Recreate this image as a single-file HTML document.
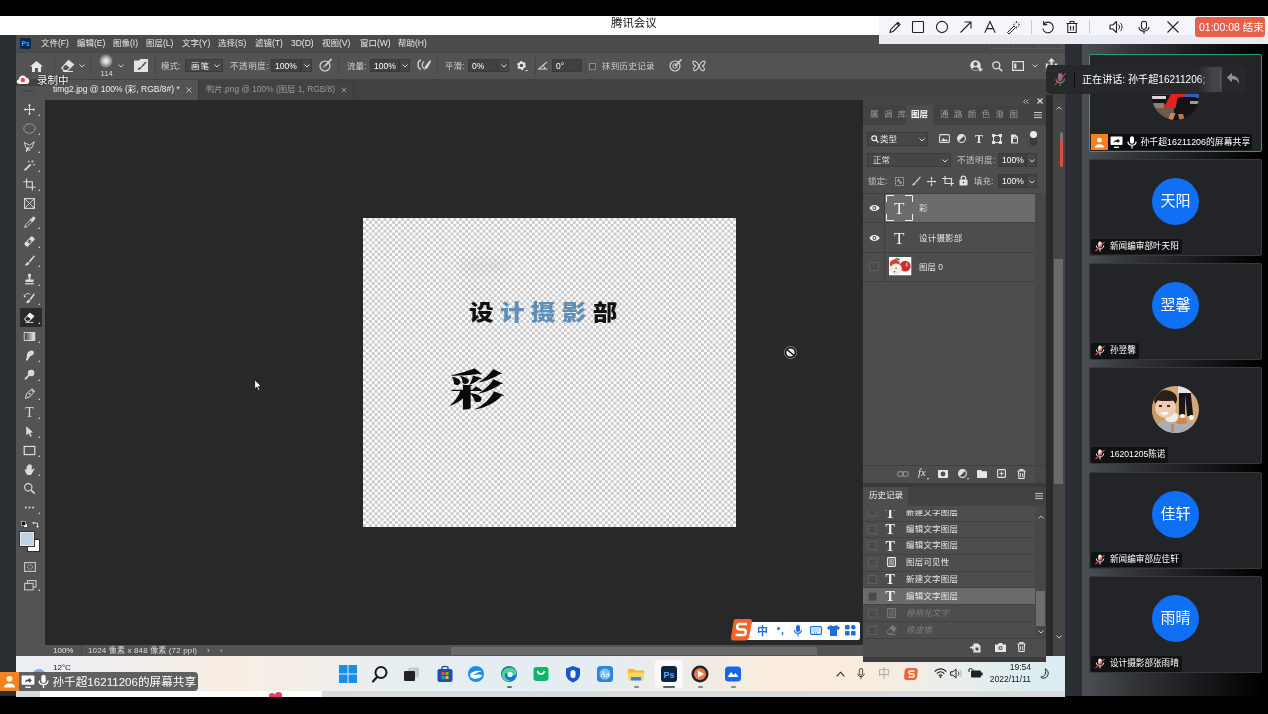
<!DOCTYPE html>
<html lang="zh-CN">
<head>
<meta charset="utf-8">
<title>腾讯会议</title>
<style>
*{box-sizing:border-box;margin:0;padding:0}
html,body{width:1268px;height:714px;overflow:hidden;background:#000}
body{position:relative;filter:blur(0.4px);font-family:"Liberation Sans","Noto Sans CJK SC",sans-serif;font-size:9px;color:#ddd;-webkit-font-smoothing:antialiased}
.a{position:absolute}
.t{position:absolute;white-space:nowrap;line-height:1}
svg{position:absolute;overflow:visible}
/* top */
#titlebar{left:0;top:16px;width:1268px;height:19px;background:#fff}
#title{left:611px;top:17.7px;font-size:11.4px;color:#111;letter-spacing:0}
#deskstrip{left:0;top:35px;width:16px;height:661px;background:#2b2e33}
/* photoshop */
#ps{left:16px;top:35px;width:1049px;height:621px;background:#282828}
#menubar{left:0;top:0;width:1049px;height:17px;background:#4b4b4b}
#optbar{left:0;top:17px;width:1049px;height:27px;background:#535353;border-top:1px solid #474747}
#tabbar{left:0;top:44px;width:1049px;height:21px;background:#424242}
#tab1{left:29px;top:45px;width:153px;height:20px;background:#535353}
#tools{left:0;top:51px;width:29px;height:570px;background:#535353}
#status{left:29px;top:610px;width:1020px;height:11px;background:#535353}
.menu{top:4px;font-size:8.5px;color:#e8e8e8}
.ol{font-size:8.5px;color:#cfcfcf;top:10px}
.field{background:#464646;border:1px solid #3a3a3a;height:13px;top:7px;font-size:8.5px;color:#eee;line-height:12.5px;padding-left:3px}
/* right meeting panel */
#mp{left:1065px;top:35px;width:203px;height:661px;background:#1c1d1f}
.tile{left:24px;width:173px;height:97px;background:#222427;border:1px solid #37383b;border-radius:2px}
.av{left:62px;top:18px;width:47px;height:47px;border-radius:50%;background:#0f6ff5;color:#fff;font-size:15px;text-align:center;line-height:46px}
.nm{left:1px;bottom:0.5px;height:15.5px;background:rgba(12,12,14,.8);color:#fff;font-size:8.6px;line-height:15.5px;padding:0 3px 0 19px;border-radius:2px;white-space:nowrap}
/* taskbar */
#taskbar{left:16px;top:656px;width:1049px;height:35px;background:linear-gradient(90deg,#eaeff4 0%,#efeeee 9%,#f8ede3 20%,#f4eee8 28%,#e6eef2 36%,#e4edf2 55%,#efece8 64%,#f9ebde 72%,#f8ecdf 82%,#e8eeec 90%,#d8edf3 100%)}
</style>
</head>
<body>
<div class="a" id="titlebar"></div>
<div class="t" id="title">腾讯会议</div>
<div class="a" id="deskstrip"></div>

<div class="a" id="ps">
  <div class="a" id="menubar"></div>
  <!-- menubar -->
  <svg style="left:4px;top:3px" width="11" height="11" viewBox="0 0 11 11"><rect width="11" height="11" rx="1.5" fill="#0a2a4d"/><text x="1.6" y="8.2" font-family="Liberation Sans,sans-serif" font-size="6.5" font-weight="bold" fill="#38a8ff">Ps</text></svg>
  <div class="t menu" style="left:25px">文件(F)</div>
  <div class="t menu" style="left:61px">编辑(E)</div>
  <div class="t menu" style="left:97px">图像(I)</div>
  <div class="t menu" style="left:130px">图层(L)</div>
  <div class="t menu" style="left:166px">文字(Y)</div>
  <div class="t menu" style="left:202px">选择(S)</div>
  <div class="t menu" style="left:239px">滤镜(T)</div>
  <div class="t menu" style="left:275px">3D(D)</div>
  <div class="t menu" style="left:306px">视图(V)</div>
  <div class="t menu" style="left:344px">窗口(W)</div>
  <div class="t menu" style="left:382px">帮助(H)</div>

  <div class="a" id="optbar"></div>
  <div class="a" id="tabbar"></div>
  <div class="a" id="tab1"></div>
  
  <div class="a" style="left:973px;top:8px;width:74px;height:6px;border:1px solid #585858;border-top:0"></div>
  <div class="a" style="left:997px;top:8px;width:1px;height:6px;background:#585858"></div>
  <div class="a" style="left:1022px;top:8px;width:1px;height:6px;background:#585858"></div>
  <!-- options bar -->
  <svg style="left:14px;top:26px" width="13" height="11" viewBox="0 0 13 11"><path d="M6.5 0 L13 5.6 H11 V11 H8 V7 H5 V11 H2 V5.6 H0 Z" fill="#e6e6e6"/></svg>
  <div class="a" style="left:38px;top:22px;width:1px;height:18px;background:#464646"></div>
  <svg style="left:45px;top:25px" width="13" height="12" viewBox="0 0 13 12"><path d="M7.5 0.5 L12.5 4.5 L6.5 10.5 H3 L0.8 8 Z" fill="none" stroke="#e0e0e0" stroke-width="1.2"/><path d="M7.5 0.5 L12.5 4.5 L9 8 L4 4 Z" fill="#e0e0e0"/><path d="M2 11.5 H12" stroke="#e0e0e0" stroke-width="1"/></svg>
  <svg style="left:63px;top:29px" width="6" height="4" viewBox="0 0 6 4"><path d="M0.5 0.5 L3 3 L5.5 0.5" fill="none" stroke="#d0d0d0" stroke-width="1"/></svg>
  <div class="a" style="left:74px;top:22px;width:1px;height:18px;background:#464646"></div>
  <div class="a" style="left:83px;top:19px;width:14px;height:14px;border-radius:50%;background:radial-gradient(circle,#f4f4f4 0%,#d0d0d0 25%,#8a8a8a 55%,rgba(83,83,83,0) 72%)"></div>
  <div class="t" style="left:84.5px;top:35px;font-size:7.6px;color:#ddd">114</div>
  <svg style="left:102px;top:29px" width="6" height="4" viewBox="0 0 6 4"><path d="M0.5 0.5 L3 3 L5.5 0.5" fill="none" stroke="#d0d0d0" stroke-width="1"/></svg>
  <svg style="left:118px;top:24px" width="14" height="13" viewBox="0 0 14 13"><path d="M0 1.5 H5 L6.5 0 H14 V13 H0 Z" fill="#e2e2e2"/><path d="M11.5 2.5 L7 7.5 L8 8.5 L12.5 3.5 Z M6.3 8 C5 8.2 4.6 9.5 3 10.6 C5 11 7 10.5 7.4 9 Z" fill="#4a4a4a"/></svg>
  <div class="a" style="left:139px;top:22px;width:1px;height:18px;background:#464646"></div>
  <div class="t ol" style="left:145px;top:27px">模式:</div>
  <div class="a field" style="left:169px;top:24px;width:38px;padding-left:5px;letter-spacing:1px">画笔</div>
  <svg style="left:198px;top:29px" width="6" height="4" viewBox="0 0 6 4"><path d="M0.5 0.5 L3 3 L5.5 0.5" fill="none" stroke="#d8d8d8" stroke-width="1"/></svg>
  <div class="t ol" style="left:214px;top:27px;letter-spacing:0.6px">不透明度:</div>
  <div class="a field" style="left:255px;top:24px;width:30px;background:#404040;color:#fff">100%</div>
  <div class="a field" style="left:285px;top:24px;width:11px"></div>
  <svg style="left:288px;top:29px" width="6" height="4" viewBox="0 0 6 4"><path d="M0.5 0.5 L3 3 L5.5 0.5" fill="none" stroke="#d8d8d8" stroke-width="1"/></svg>
  <svg style="left:303px;top:23px" width="14" height="14" viewBox="0 0 14 14"><circle cx="6" cy="8" r="5" fill="none" stroke="#d8d8d8" stroke-width="1.2"/><path d="M6 8 L12.5 1" stroke="#d8d8d8" stroke-width="1.6"/><path d="M4 9.5 L6 8" stroke="#d8d8d8" stroke-width="1"/></svg>
  <div class="a" style="left:322px;top:22px;width:1px;height:18px;background:#464646"></div>
  <div class="t ol" style="left:331px;top:27px">流量:</div>
  <div class="a field" style="left:354px;top:24px;width:29px;background:#404040;color:#fff">100%</div>
  <div class="a field" style="left:383px;top:24px;width:11px"></div>
  <svg style="left:386px;top:29px" width="6" height="4" viewBox="0 0 6 4"><path d="M0.5 0.5 L3 3 L5.5 0.5" fill="none" stroke="#d8d8d8" stroke-width="1"/></svg>
  <svg style="left:400px;top:24px" width="16" height="12" viewBox="0 0 16 12"><path d="M5 1 C1 2 1 9 5 10.5" fill="none" stroke="#d8d8d8" stroke-width="1.3"/><path d="M8 2.5 C5.5 4 5.5 8 8 9.5" fill="none" stroke="#d8d8d8" stroke-width="1.2"/><path d="M14 1 L9 7.5 L8 11 L11.5 9 L15 2.5 Z" fill="#d8d8d8"/></svg>
  <div class="a" style="left:421px;top:22px;width:1px;height:18px;background:#464646"></div>
  <div class="t ol" style="left:429px;top:27px">平滑:</div>
  <div class="a field" style="left:452px;top:24px;width:30px;background:#404040;color:#fff">0%</div>
  <div class="a field" style="left:482px;top:24px;width:11px"></div>
  <svg style="left:485px;top:29px" width="6" height="4" viewBox="0 0 6 4"><path d="M0.5 0.5 L3 3 L5.5 0.5" fill="none" stroke="#d8d8d8" stroke-width="1"/></svg>
  <svg style="left:500px;top:25px" width="12" height="12" viewBox="0 0 12 12"><circle cx="5.5" cy="5.5" r="3.2" fill="none" stroke="#e6e6e6" stroke-width="2.4" stroke-dasharray="2 1.35"/><circle cx="5.5" cy="5.5" r="2.6" fill="none" stroke="#e6e6e6" stroke-width="1.6"/><path d="M9 10 h3 l-1.5 1.6 z" fill="#e6e6e6"/></svg>
  <div class="a" style="left:519px;top:22px;width:1px;height:18px;background:#464646"></div>
  <div class="a" style="left:569px;top:22px;width:1px;height:18px;background:#464646"></div>
  <svg style="left:522px;top:26px" width="10" height="9" viewBox="0 0 10 9"><path d="M9 0.8 L0.8 8 H9.5" fill="none" stroke="#d8d8d8" stroke-width="1.1"/><path d="M5 4.2 C6.2 5.4 6.6 6.6 6.5 8" fill="none" stroke="#d8d8d8" stroke-width="1"/></svg>
  <div class="a field" style="left:536px;top:24px;width:30px;background:#404040;color:#fff">0°</div>
  <div class="a" style="left:573px;top:28px;width:7px;height:7px;border:1px solid #8a8a8a;background:#4a4a4a"></div>
  <div class="t ol" style="left:586px;top:27px;letter-spacing:0.3px">抹到历史记录</div>
  <svg style="left:653px;top:24px" width="13" height="13" viewBox="0 0 13 13"><circle cx="6" cy="7" r="5" fill="none" stroke="#d0d0d0" stroke-width="1.2"/><circle cx="6" cy="7" r="2.2" fill="none" stroke="#d0d0d0" stroke-width="1"/><path d="M6 7 L12.5 0.5" stroke="#d0d0d0" stroke-width="1.6"/></svg>
  <svg style="left:676px;top:25px" width="14" height="12" viewBox="0 0 14 12"><path d="M7 6 C5 1 1.5 0.5 1 1.5 C0.5 3 2 5.5 4 6 C2 6.5 1 9 2 10.5 C3.5 11.5 6 9 7 6 C8 9 10.5 11.5 12 10.5 C13 9 12 6.5 10 6 C12 5.5 13.5 3 13 1.5 C12.5 0.5 9 1 7 6 Z" fill="none" stroke="#d0d0d0" stroke-width="1.1"/></svg>
  <!-- right icons -->
  <svg style="left:954px;top:25px" width="13" height="12" viewBox="0 0 13 12"><circle cx="5.5" cy="5.5" r="5.2" fill="#e0e0e0"/><circle cx="5.5" cy="4" r="2" fill="#535353"/><path d="M2 9 C2.5 6.5 8.5 6.5 9 9 C7.5 10.8 3.5 10.8 2 9Z" fill="#535353"/><path d="M10.5 7.5 v4 M8.5 9.5 h4" stroke="#e0e0e0" stroke-width="1.4"/></svg>
  <svg style="left:976px;top:26px" width="11" height="11" viewBox="0 0 11 11"><circle cx="4.3" cy="4.3" r="3.5" fill="none" stroke="#e0e0e0" stroke-width="1.3"/><path d="M7 7 L10.3 10.3" stroke="#e0e0e0" stroke-width="1.5"/></svg>
  <svg style="left:996px;top:26px" width="12" height="10" viewBox="0 0 12 10"><rect x="0.6" y="0.6" width="10.8" height="8.8" fill="none" stroke="#e0e0e0" stroke-width="1.2"/><rect x="2.2" y="2.5" width="2.2" height="5" fill="#e0e0e0"/></svg>
  <svg style="left:1016px;top:29px" width="6" height="4" viewBox="0 0 6 4"><path d="M0.5 0.5 L3 3 L5.5 0.5" fill="none" stroke="#d0d0d0" stroke-width="1"/></svg>
  <svg style="left:1029px;top:23px" width="13" height="14" viewBox="0 0 13 14"><path d="M6.5 0 L10 3.5 H7.6 V9 H5.4 V3.5 H3 Z" fill="#e0e0e0"/><path d="M0.8 5.5 H3.5 V7 H2.3 V12 H10.7 V7 H9.5 V5.5 H12.2 V13.5 H0.8 Z" fill="#e0e0e0"/></svg>

  <!-- tabs -->
  <div class="t" style="left:37px;top:50px;font-size:8.5px;color:#f0f0f0">timg2.jpg @ 100% (彩, RGB/8#) * </div>
  <svg style="left:170px;top:52px" width="6" height="6" viewBox="0 0 6 6"><path d="M0.5 0.5 L5.5 5.5 M5.5 0.5 L0.5 5.5" stroke="#bdbdbd" stroke-width="0.9"/></svg>
  <div class="a" style="left:182px;top:45px;width:1px;height:20px;background:#383838"></div>
  <div class="t" style="left:190px;top:50px;font-size:8.4px;color:#9a9a9a">鸭片.png @ 100% (图层 1, RGB/8)</div>
  <svg style="left:325px;top:52px" width="6" height="6" viewBox="0 0 6 6"><path d="M0.5 0.5 L5.5 5.5 M5.5 0.5 L0.5 5.5" stroke="#a0a0a0" stroke-width="0.9"/></svg>
  <div class="a" style="left:337px;top:45px;width:1px;height:20px;background:#383838"></div>
  <div class="a" id="tools"></div>
  <div class="a" id="status"></div>

  <!-- canvas -->
  <div class="a" id="canvas" style="left:346.6px;top:182.9px;width:373.2px;height:309.1px;background:#fff repeating-conic-gradient(#cbcbcb 0% 25%, #ffffff 0% 50%) 0 0/5.84px 5.84px;overflow:hidden">
    <div class="a" style="left:96px;top:40px;width:50px;height:16px;background:rgba(120,120,120,.09);filter:blur(5px);border-radius:8px"></div>
    <div class="a" style="left:100px;top:68px;width:26px;height:8px;background:rgba(120,120,120,.05);filter:blur(4px);border-radius:4px"></div>
    <div class="t" id="ctext" style="left:106.4px;top:84.1px;font-family:'Liberation Sans','Noto Sans CJK SC',sans-serif;font-weight:900;font-size:22px;letter-spacing:5.6px;color:#111;transform:scaleX(1.12);transform-origin:0 0">设<span style="color:#5f8fb8">计摄影</span>部</div>
    <div class="t" id="cai" style="left:86.4px;top:152.1px;font-family:'Liberation Serif','Noto Serif CJK SC',serif;font-weight:900;font-size:50px;color:#0a0a0a;transform:scale(1.11,0.83);transform-origin:0 0">彩</div>
  </div>
  <!-- status -->
  <div class="t" style="left:37px;top:612px;font-size:8px;color:#e8e8e8">100%</div>
  <div class="a" style="left:65px;top:610px;width:1px;height:11px;background:#454545"></div>
  <div class="t" style="left:72px;top:612px;font-size:8px;color:#dcdcdc;letter-spacing:0.15px">1024 像素 x 848 像素 (72 ppi)</div>
  <div class="t" style="left:191px;top:612px;font-size:8px;color:#dcdcdc">›</div>
  <div class="t" style="left:204px;top:612px;font-size:8px;color:#bbb">‹</div>
  <div class="a" style="left:435px;top:612px;width:366px;height:8px;background:#6a6a6a"></div>
  <!-- cursors -->
  <svg style="left:238.3px;top:343.8px" width="8.5" height="12.3" viewBox="0 0 9 13"><path d="M0.7 0.7 V10.5 L3 8.4 L4.8 12.3 L6.4 11.6 L4.7 7.8 H7.8 Z" fill="#fff" stroke="#111" stroke-width="0.9"/></svg>
  <svg style="left:767.8px;top:311px" width="13" height="13" viewBox="0 0 13 13"><circle cx="6.5" cy="6.5" r="6" fill="#0a0a0a" stroke="#a0a0a0" stroke-width="0.8"/><circle cx="6.5" cy="6.5" r="4.1" fill="#ececec"/><path d="M3 3.4 L10 9.6" stroke="#0a0a0a" stroke-width="1.4"/></svg>
  <!-- tools -->
  <div class="a" style="left:6px;top:55px;width:12px;height:2px;background:#474747"></div>
  <div class="a" style="left:3.5px;top:273px;width:22px;height:19px;background:#2a2a2a;border-radius:1px"></div>
  <svg style="left:7px;top:67.5px" width="13" height="13" viewBox="0 0 16 16"><path d="M8 1 L10 3.5 H8.6 V7.4 H12.5 V6 L15 8 L12.5 10 V8.6 H8.6 V12.5 H10 L8 15 L6 12.5 H7.4 V8.6 H3.5 V10 L1 8 L3.5 6 V7.4 H7.4 V3.5 H6 Z" fill="#dcdcdc"/></svg>
  <div class="a" style="left:22px;top:79.0px;width:0;height:0;border-left:2px solid transparent;border-bottom:2px solid #c8c8c8"></div>
  <svg style="left:7px;top:86.5px" width="13" height="13" viewBox="0 0 16 16"><ellipse cx="8" cy="8" rx="7" ry="5.8" fill="none" stroke="#dcdcdc" stroke-width="1" stroke-dasharray="1.8 1.2"/></svg>
  <div class="a" style="left:22px;top:98.0px;width:0;height:0;border-left:2px solid transparent;border-bottom:2px solid #c8c8c8"></div>
  <svg style="left:7px;top:104.5px" width="13" height="13" viewBox="0 0 16 16"><path d="M1.5 3 L8 6.5 L14 2 L10.5 10 L6.5 9.5 L4 14.5 L5.5 9 L8.5 13 L4.5 12 Z" fill="none" stroke="#dcdcdc" stroke-width="1.1"/></svg>
  <div class="a" style="left:22px;top:116.0px;width:0;height:0;border-left:2px solid transparent;border-bottom:2px solid #c8c8c8"></div>
  <svg style="left:7px;top:123.5px" width="13" height="13" viewBox="0 0 16 16"><path d="M2 14 L9.5 6.5" stroke="#dcdcdc" stroke-width="2.2"/><path d="M11.5 1.5 v3 M10 3 h3 M13.5 6 v2 M12.5 7 h2 M7 2 v2 M6 3 h2" stroke="#dcdcdc" stroke-width="0.9"/></svg>
  <div class="a" style="left:22px;top:135.0px;width:0;height:0;border-left:2px solid transparent;border-bottom:2px solid #c8c8c8"></div>
  <svg style="left:7px;top:142.5px" width="13" height="13" viewBox="0 0 16 16"><path d="M4.5 0.5 V11.5 H15.5 M0.5 4.5 H11.5 V15.5" fill="none" stroke="#dcdcdc" stroke-width="1.3"/></svg>
  <div class="a" style="left:22px;top:154.0px;width:0;height:0;border-left:2px solid transparent;border-bottom:2px solid #c8c8c8"></div>
  <svg style="left:7px;top:161.5px" width="13" height="13" viewBox="0 0 16 16"><rect x="2" y="2" width="12" height="12" fill="none" stroke="#dcdcdc" stroke-width="1.3"/><path d="M2 2 L14 14 M14 2 L2 14" stroke="#dcdcdc" stroke-width="1.1"/></svg>
  <svg style="left:7px;top:180.5px" width="13" height="13" viewBox="0 0 16 16"><path d="M2 14 L3 11 L9 5 L11 7 L5 13 Z" fill="none" stroke="#dcdcdc" stroke-width="1.1"/><path d="M9 3.5 L12.5 7 M10 5 L12.5 1.8 C13.5 1 15 2.5 14.2 3.5 L11.5 6.2" stroke="#dcdcdc" stroke-width="1.6" fill="#dcdcdc"/></svg>
  <div class="a" style="left:22px;top:192.0px;width:0;height:0;border-left:2px solid transparent;border-bottom:2px solid #c8c8c8"></div>
  <svg style="left:7px;top:199.5px" width="13" height="13" viewBox="0 0 16 16"><g transform="rotate(-45 8 8)"><rect x="1" y="5" width="14" height="6" rx="2" fill="#dcdcdc"/><rect x="6" y="6" width="4" height="4" fill="#535353"/><circle cx="7.2" cy="7.2" r=".5" fill="#dcdcdc"/><circle cx="8.8" cy="8.8" r=".5" fill="#dcdcdc"/></g></svg>
  <div class="a" style="left:22px;top:211.0px;width:0;height:0;border-left:2px solid transparent;border-bottom:2px solid #c8c8c8"></div>
  <svg style="left:7px;top:218.5px" width="13" height="13" viewBox="0 0 16 16"><path d="M13.5 1.5 L7 9 L8.5 10.5 L14.5 3 Z" fill="#dcdcdc"/><path d="M6.3 9.8 C4.5 10 4.2 12 2 13.8 C4.8 14.6 7.5 13.4 7.8 11.3 Z" fill="#dcdcdc"/></svg>
  <div class="a" style="left:22px;top:230.0px;width:0;height:0;border-left:2px solid transparent;border-bottom:2px solid #c8c8c8"></div>
  <svg style="left:7px;top:237.5px" width="13" height="13" viewBox="0 0 16 16"><path d="M6 2 C6 0.5 10 0.5 10 2 C10 3.5 9 4.5 9 6.5 V8 H13 V11 H3 V8 H7 V6.5 C7 4.5 6 3.5 6 2 Z" fill="#dcdcdc"/><rect x="2.5" y="12.5" width="11" height="1.5" fill="#dcdcdc"/></svg>
  <div class="a" style="left:22px;top:249.0px;width:0;height:0;border-left:2px solid transparent;border-bottom:2px solid #c8c8c8"></div>
  <svg style="left:7px;top:256.5px" width="13" height="13" viewBox="0 0 16 16"><path d="M13.5 1.5 L8 8.5 L9.5 10 L14.5 3 Z" fill="#dcdcdc"/><path d="M7.3 9.3 C5.5 9.5 5.2 11.5 3.5 13.5 C6 14 8.5 13 8.8 10.8 Z" fill="#dcdcdc"/><path d="M1.5 6 A4.5 4.5 0 0 1 9 3" fill="none" stroke="#dcdcdc" stroke-width="1.1"/><path d="M0.5 4 L1.6 6.8 L4 5.2 Z" fill="#dcdcdc"/></svg>
  <div class="a" style="left:22px;top:268.0px;width:0;height:0;border-left:2px solid transparent;border-bottom:2px solid #c8c8c8"></div>
  <svg style="left:7px;top:275.5px" width="13" height="13" viewBox="0 0 16 16"><path d="M8.5 2.5 L13.5 6.5 L7.5 12.5 H4 L1.8 10 Z" fill="none" stroke="#ffffff" stroke-width="1.2"/><path d="M8.5 2.5 L13.5 6.5 L10 10 L5 6 Z" fill="#ffffff"/><path d="M3 14 H13" stroke="#ffffff" stroke-width="1"/></svg>
  <div class="a" style="left:22px;top:287.0px;width:0;height:0;border-left:2px solid transparent;border-bottom:2px solid #c8c8c8"></div>
  <svg style="left:7px;top:294.5px" width="13" height="13" viewBox="0 0 16 16"><defs><linearGradient id="gg" x1="0" x2="1"><stop offset="0" stop-color="#3a3a3a"/><stop offset="1" stop-color="#f0f0f0"/></linearGradient></defs><rect x="1.5" y="3" width="13" height="10" fill="url(#gg)" stroke="#dcdcdc" stroke-width="1.1"/></svg>
  <div class="a" style="left:22px;top:306.0px;width:0;height:0;border-left:2px solid transparent;border-bottom:2px solid #c8c8c8"></div>
  <svg style="left:7px;top:313.5px" width="13" height="13" viewBox="0 0 16 16"><path d="M9 2 C12 1 14.5 3 13 6 C12 8 9 8 8 10 L5.5 14.5 L3.5 13.5 L5 9 C4 7 5.5 3 9 2 Z" fill="#dcdcdc"/></svg>
  <div class="a" style="left:22px;top:325.0px;width:0;height:0;border-left:2px solid transparent;border-bottom:2px solid #c8c8c8"></div>
  <svg style="left:7px;top:332.5px" width="13" height="13" viewBox="0 0 16 16"><circle cx="10" cy="6" r="4" fill="#dcdcdc"/><path d="M7.5 8.5 L2.5 14" stroke="#dcdcdc" stroke-width="2"/></svg>
  <div class="a" style="left:22px;top:344.0px;width:0;height:0;border-left:2px solid transparent;border-bottom:2px solid #c8c8c8"></div>
  <svg style="left:7px;top:351.5px" width="13" height="13" viewBox="0 0 16 16"><path d="M3 14 L4.5 8 L10 3.5 L13 6.5 L8.5 12 Z" fill="none" stroke="#dcdcdc" stroke-width="1.2"/><circle cx="8.2" cy="8.3" r="1.1" fill="#dcdcdc"/><path d="M10.5 2 L14.5 6" stroke="#dcdcdc" stroke-width="1.6"/></svg>
  <div class="a" style="left:22px;top:363.0px;width:0;height:0;border-left:2px solid transparent;border-bottom:2px solid #c8c8c8"></div>
  <svg style="left:7px;top:370.5px" width="13" height="13" viewBox="0 0 16 16"><text x="8" y="14" text-anchor="middle" font-family="Liberation Serif,serif" font-size="17" fill="#dcdcdc">T</text></svg>
  <div class="a" style="left:22px;top:382.0px;width:0;height:0;border-left:2px solid transparent;border-bottom:2px solid #c8c8c8"></div>
  <svg style="left:7px;top:389.5px" width="13" height="13" viewBox="0 0 16 16"><path d="M4 1.5 L4 13 L7 10.2 L9 14.5 L10.8 13.7 L8.8 9.6 L12.5 9.3 Z" fill="#dcdcdc"/></svg>
  <div class="a" style="left:22px;top:401.0px;width:0;height:0;border-left:2px solid transparent;border-bottom:2px solid #c8c8c8"></div>
  <svg style="left:7px;top:408.5px" width="13" height="13" viewBox="0 0 16 16"><rect x="1.5" y="3" width="13" height="10" fill="none" stroke="#dcdcdc" stroke-width="1.5"/></svg>
  <div class="a" style="left:22px;top:420.0px;width:0;height:0;border-left:2px solid transparent;border-bottom:2px solid #c8c8c8"></div>
  <svg style="left:7px;top:427.5px" width="13" height="13" viewBox="0 0 16 16"><path d="M4.5 8.5 V4 C4.5 3 6 3 6 4 V2.5 C6 1.5 7.6 1.5 7.6 2.5 V2 C7.6 1 9.2 1 9.2 2 V3 C9.2 2 10.8 2 10.8 3 V9 L12.5 7 C13.2 6.2 14.4 7 13.8 8 L11 13 C10.5 14.3 9.5 14.8 8 14.8 H7 C5 14.8 4 13.5 3.5 12 L2.2 8.8 C1.8 7.6 3.3 7.2 3.8 8.2 Z" fill="#dcdcdc"/></svg>
  <div class="a" style="left:22px;top:439.0px;width:0;height:0;border-left:2px solid transparent;border-bottom:2px solid #c8c8c8"></div>
  <svg style="left:7px;top:446.5px" width="13" height="13" viewBox="0 0 16 16"><circle cx="6.5" cy="6.5" r="4.5" fill="none" stroke="#dcdcdc" stroke-width="1.4"/><path d="M10 10 L14.5 14.5" stroke="#dcdcdc" stroke-width="1.8"/></svg>
  <svg style="left:7px;top:465.5px" width="13" height="13" viewBox="0 0 16 16"><circle cx="3.5" cy="8" r="1.2" fill="#dcdcdc"/><circle cx="8" cy="8" r="1.2" fill="#dcdcdc"/><circle cx="12.5" cy="8" r="1.2" fill="#dcdcdc"/></svg>
  <div class="a" style="left:22px;top:477.0px;width:0;height:0;border-left:2px solid transparent;border-bottom:2px solid #c8c8c8"></div>
  <svg style="left:5px;top:486px" width="7" height="7" viewBox="0 0 7 7"><rect x="2.5" y="2.5" width="4" height="4" fill="#fff" stroke="#111" stroke-width=".6"/><rect x="0.5" y="0.5" width="4" height="4" fill="#111" stroke="#ddd" stroke-width=".6"/></svg>
  <svg style="left:16px;top:486px" width="8" height="7" viewBox="0 0 8 7"><path d="M1.5 2 H5.5 V6" fill="none" stroke="#ddd" stroke-width="1"/><path d="M0 2 L2 0.4 V3.6Z M5.5 7 L4 5 H7Z" fill="#ddd"/></svg>
  <div class="a" style="left:11px;top:504px;width:13px;height:13px;background:#fff;border:1px solid #2a2a2a"></div>
  <div class="a" style="left:4px;top:497px;width:14px;height:14px;background:#bcd3e6;border:1px solid #e8e8e8;outline:1px solid #333"></div>
  <svg style="left:8px;top:527px" width="12" height="10" viewBox="0 0 12 10"><rect x="0.6" y="0.6" width="10.8" height="8.8" fill="none" stroke="#c8c8c8" stroke-width="1.1"/><circle cx="6" cy="5" r="2.4" fill="none" stroke="#c8c8c8" stroke-width="1" stroke-dasharray="1.2 .8"/></svg>
  <svg style="left:8px;top:545px" width="13" height="11" viewBox="0 0 13 11"><rect x="3.5" y="0.6" width="8.5" height="6.5" fill="none" stroke="#c8c8c8" stroke-width="1.1"/><rect x="0.6" y="3.4" width="8.5" height="6.5" fill="#535353" stroke="#c8c8c8" stroke-width="1.1"/></svg>
  <div class="a" style="left:22px;top:554.0px;width:0;height:0;border-left:2px solid transparent;border-bottom:2px solid #c8c8c8"></div>
</div>

<div class="a" id="taskbar"></div>
<svg style="left:338.5px;top:665.0px" width="18" height="18" viewBox="0 0 18 18"><rect x="0" y="0" width="8.5" height="8.5" fill="#1a8fe8"/><rect x="9.5" y="0" width="8.5" height="8.5" fill="#1a8fe8"/><rect x="0" y="9.5" width="8.5" height="8.5" fill="#1a8fe8"/><rect x="9.5" y="9.5" width="8.5" height="8.5" fill="#1a8fe8"/></svg>
<svg style="left:371.0px;top:665.0px" width="18" height="18" viewBox="0 0 18 18"><circle cx="10" cy="7.5" r="5.5" fill="none" stroke="#1a1a1a" stroke-width="2"/><path d="M6 12 L2 16.5" stroke="#1a1a1a" stroke-width="2.2" stroke-linecap="round"/></svg>
<svg style="left:402.0px;top:665.0px" width="18" height="18" viewBox="0 0 18 18"><rect x="6" y="2.5" width="11" height="10" rx="1" fill="#c9c9c9"/><rect x="2" y="6" width="11" height="10" rx="1" fill="#222"/></svg>
<svg style="left:436.0px;top:665.0px" width="18" height="18" viewBox="0 0 18 18"><rect x="1.5" y="4" width="15" height="13" rx="2" fill="#1f4fa8"/><path d="M6 4 V2.5 C6 1 12 1 12 2.5 V4" fill="none" stroke="#1f4fa8" stroke-width="1.4"/><rect x="5.5" y="7" width="3" height="3" fill="#f25022"/><rect x="9.5" y="7" width="3" height="3" fill="#7fba00"/><rect x="5.5" y="11" width="3" height="3" fill="#00a4ef"/><rect x="9.5" y="11" width="3" height="3" fill="#ffb900"/></svg>
<svg style="left:467.0px;top:665.0px" width="18" height="18" viewBox="0 0 18 18"><circle cx="9" cy="9" r="8" fill="#1d8de6"/><path d="M3 9.5 C5 6 11 5 15 6.5 C11 7 7.5 8.5 7 10.5 C9 9.5 13 9 15.5 10.5 C13 14 7 15 3.5 12 Z" fill="#fff"/></svg>
<svg style="left:500.0px;top:665.0px" width="18" height="18" viewBox="0 0 18 18"><circle cx="9" cy="9" r="8" fill="#1b74d6"/><path d="M2 10 C2 4 9 1 14 4 C17 6 17 10 14 10.5 H9.5 C9.5 8 6.5 7 5 9 C4 12 6.5 15.5 11 15.5 C6 18 2 14.5 2 10 Z" fill="#4fd889"/><circle cx="10" cy="9.5" r="2.6" fill="#fff"/></svg>
<svg style="left:532.0px;top:665.0px" width="18" height="18" viewBox="0 0 18 18"><rect x="1.5" y="2" width="15" height="14" rx="3" fill="#10b56a"/><path d="M5.5 6 C6.5 10 11.5 10 12.5 6" fill="none" stroke="#fff" stroke-width="1.6"/></svg>
<svg style="left:564.0px;top:665.0px" width="18" height="18" viewBox="0 0 18 18"><path d="M9 1 L16 3.5 V9 C16 13 13 16 9 17.5 C5 16 2 13 2 9 V3.5 Z" fill="#1556d6"/><rect x="6.5" y="5" width="5" height="8" rx="2.5" fill="#fff"/></svg>
<svg style="left:596.0px;top:665.0px" width="18" height="18" viewBox="0 0 18 18"><rect x="1" y="1" width="16" height="16" rx="3.5" fill="#2a86e0"/><circle cx="9" cy="9" r="5.5" fill="#7fc0f5"/><text x="9" y="12" text-anchor="middle" font-family="Liberation Serif,serif" font-size="8" fill="#fff">Aa</text></svg>
<svg style="left:627.0px;top:665.0px" width="18" height="18" viewBox="0 0 18 18"><path d="M1 4 H7 L8.5 5.5 H17 V15 H1 Z" fill="#f5b82e"/><rect x="1" y="7.5" width="16" height="8" rx="1" fill="#fdd667"/><rect x="4" y="12" width="10" height="3.5" fill="#2f89d9"/></svg>
<div class="a" style="left:655px;top:660px;width:28px;height:28px;border-radius:4px;background:rgba(255,255,255,.7)"></div>
<svg style="left:660.0px;top:665.0px" width="18" height="18" viewBox="0 0 18 18"><rect x="1" y="1" width="16" height="16" rx="3" fill="#0b2347"/><text x="9" y="12.5" text-anchor="middle" font-family="Liberation Sans,sans-serif" font-size="9" font-weight="bold" fill="#4db1ff">Ps</text></svg>
<svg style="left:691.0px;top:665.0px" width="18" height="18" viewBox="0 0 18 18"><circle cx="9" cy="9" r="8.5" fill="#20242c"/><circle cx="9" cy="9" r="6" fill="#f2764b"/><path d="M7 5.5 L13 9 L7 12.5 Z" fill="#fff"/></svg>
<svg style="left:724.0px;top:665.0px" width="18" height="18" viewBox="0 0 18 18"><rect x="1" y="1.5" width="16" height="15" rx="3.5" fill="#1567e8"/><path d="M3.5 12 L7 7 L9.5 10 L11.5 8 L14.5 12 Z" fill="#fff"/></svg>
<div class="a" style="left:506.5px;top:685.8px;width:5px;height:2px;border-radius:1px;background:#6d6d6d"></div>
<div class="a" style="left:663.0px;top:685.8px;width:12px;height:2px;border-radius:1px;background:#5a5f68"></div>
<div class="a" style="left:697.5px;top:685.8px;width:5px;height:2px;border-radius:1px;background:#8a8a8a"></div>
<div class="a" style="left:730.5px;top:685.8px;width:5px;height:2px;border-radius:1px;background:#8a8a8a"></div>
<div class="a" style="left:633.5px;top:685.8px;width:5px;height:2px;border-radius:1px;background:#8a8a8a"></div>
<svg style="left:836px;top:671px" width="9" height="6" viewBox="0 0 9 6"><path d="M0.7 5.3 L4.5 1.2 L8.3 5.3" fill="none" stroke="#222" stroke-width="1.1"/></svg>
<svg style="left:857px;top:668px" width="8" height="12" viewBox="0 0 10 15"><rect x="3" y="0.6" width="4" height="8.4" rx="2" fill="none" stroke="#222" stroke-width="1"/><path d="M1 7 C1 12 9 12 9 7 M5 11 V14" fill="none" stroke="#222" stroke-width="1"/></svg>
<div class="t" style="left:878px;top:668px;font-size:12px;color:#a9a9a9">中</div>
<svg style="left:905px;top:668px" width="13" height="12" viewBox="0 0 13 12"><rect x="0" y="0" width="13" height="12" rx="3" fill="#f0652a" transform="skewX(-6)"/><path d="M9.5 3 H5 C3.5 3 3.5 6 5 6 H8 C9.5 6 9.5 9 8 9 H3.5" fill="none" stroke="#fff" stroke-width="1.5"/></svg>
<svg style="left:934px;top:668px" width="13" height="10" viewBox="0 0 13 10"><path d="M0.7 3.5 C4 0 9 0 12.3 3.5 M2.7 5.6 C5 3.4 8 3.4 10.3 5.6 M4.6 7.6 C5.8 6.6 7.2 6.6 8.4 7.6" fill="none" stroke="#222" stroke-width="1.1"/><circle cx="6.5" cy="9" r="0.9" fill="#222"/></svg>
<svg style="left:950px;top:668px" width="12" height="11" viewBox="0 0 12 11"><path d="M0.6 3.8 H3 L6 1 V10 L3 7.2 H0.6 Z" fill="none" stroke="#222" stroke-width="1"/><path d="M8 3.5 C9 4.5 9 6.5 8 7.5" fill="none" stroke="#222" stroke-width="1"/><path d="M9.8 2 C11.5 4 11.5 7 9.8 9" fill="none" stroke="#aaa" stroke-width="1"/></svg>
<svg style="left:968px;top:668px" width="15" height="11" viewBox="0 0 15 11"><rect x="3" y="2.5" width="10" height="7" rx="1" fill="#222"/><rect x="13" y="4.5" width="1.6" height="3" fill="#222"/><path d="M1 1 C3 0 5 1 5.5 3 M1 1 V4" fill="none" stroke="#222" stroke-width="1"/></svg>
<div class="t" style="left:980px;top:663px;width:51px;text-align:right;font-size:8.5px;color:#1a1a1a">19:54</div>
<div class="t" style="left:980px;top:675px;width:51px;text-align:right;font-size:8.5px;color:#1a1a1a">2022/11/11</div>
<svg style="left:1040px;top:668px" width="10" height="11" viewBox="0 0 10 11"><path d="M5 0.8 C9 2 9.5 8 5 10 C3 10.6 1.5 10 0.8 9 C5 9 7 4.5 5 0.8 Z" fill="none" stroke="#222" stroke-width="1"/></svg>
<!-- weather -->
<div class="a" style="left:32px;top:669px;width:14px;height:14px;border-radius:50%;background:#6f93d6;opacity:.75"></div>
<div class="t" style="left:53px;top:664px;font-size:8px;color:#1a1a1a">12°C</div>
<div class="t" style="left:53px;top:676px;font-size:8px;color:#6a6a6a">多云</div>
<!-- below taskbar strip -->
<div class="a" style="left:16px;top:691px;width:1049px;height:6px;background:#d9dadc"></div>
<div class="a" style="left:40px;top:691px;width:282px;height:6px;background:#fff"></div>
<div class="a" style="left:269px;top:693px;width:6px;height:5px;border-radius:50% 50% 0 0;background:#e8406a"></div>
<div class="a" style="left:275px;top:692px;width:7px;height:6px;border-radius:50% 50% 0 0;background:#e8406a"></div>
<div class="a" style="left:0;top:697px;width:1268px;height:17px;background:#000"></div>
<!-- sogou bar -->
<div class="a" style="left:742px;top:621.5px;width:118px;height:18.5px;border-radius:2px;background:#fff"></div>
<svg style="left:730px;top:618px" width="23" height="23" viewBox="0 0 22 23"><path d="M5 1 H19 C21 1 22 2.5 21.5 4.5 L18.5 19 C18 21.5 16.5 22.5 14 22.5 H3 C1 22.5 0 21 0.5 19 L3 3.5 C3.3 2 4 1 5 1 Z" fill="#f2632a"/><path d="M16.5 6 H9 C6 6 6 11.5 9 11.5 H13 C16 11.5 16 17 13 17 H5" fill="none" stroke="#fff" stroke-width="2.6"/></svg>
<div class="t" style="left:757px;top:626px;font-size:11px;font-weight:bold;color:#1b6fd8">中</div>
<div class="a" style="left:777px;top:627px;width:3px;height:3px;border-radius:50%;background:#1b6fd8"></div>
<div class="t" style="left:781px;top:625px;font-size:11px;font-weight:bold;color:#1b6fd8">,</div>
<svg style="left:794px;top:625px" width="8" height="12" viewBox="0 0 8 12"><rect x="2" y="0" width="4" height="7" rx="2" fill="#1b6fd8"/><path d="M0.6 5 C0.6 9.5 7.4 9.5 7.4 5 M4 8.5 V11.5" fill="none" stroke="#1b6fd8" stroke-width="1.1"/></svg>
<svg style="left:809.5px;top:626px" width="12" height="9" viewBox="0 0 12 9"><rect x="0.6" y="0.6" width="10.8" height="7.8" rx="1" fill="none" stroke="#1b6fd8" stroke-width="1.2"/><path d="M2.5 3 H9.5 M2.5 5 H9.5 M4 6.8 H8" stroke="#1b6fd8" stroke-width="0.9" stroke-dasharray="1.2 .8"/></svg>
<svg style="left:826.5px;top:625px" width="13" height="11" viewBox="0 0 13 11"><path d="M4 0 C5 1.5 8 1.5 9 0 L13 2.5 L11.5 5 L10 4.3 V11 H3 V4.3 L1.5 5 L0 2.5 Z" fill="#1b6fd8"/></svg>
<svg style="left:845px;top:625px" width="11" height="11" viewBox="0 0 11 11"><rect x="0" y="0" width="4.6" height="4.6" rx="1" fill="#1b6fd8"/><rect x="6" y="0" width="4.6" height="4.6" rx="2.3" fill="#1b6fd8"/><rect x="0" y="6" width="4.6" height="4.6" rx="1" fill="#1b6fd8"/><rect x="6" y="6" width="4.6" height="4.6" rx="1" fill="#1b6fd8"/></svg>


<!-- dock column right of panels -->
<div class="a" style="left:1046px;top:95px;width:7px;height:561px;background:#2a2a2a"></div>
<div class="a" style="left:1053px;top:100px;width:12px;height:556px;background:#454545"></div>
<div class="a" style="left:1054px;top:259px;width:8.5px;height:225px;background:#6a6a6a"></div>
<div class="a" style="left:1060px;top:132px;width:3px;height:12px;background:#767676;border-radius:1.5px"></div>
<div class="a" style="left:1060px;top:140px;width:3px;height:27px;background:#d9503f;border-radius:1.5px"></div>
<svg style="left:1056px;top:106px" width="6" height="4" viewBox="0 0 6 4"><path d="M0.5 3.5 L3 1 L5.5 3.5" fill="none" stroke="#c8c8c8" stroke-width="1"/></svg>
<svg style="left:1056px;top:635px" width="6" height="4" viewBox="0 0 6 4"><path d="M0.5 0.5 L3 3 L5.5 0.5" fill="none" stroke="#c8c8c8" stroke-width="1"/></svg>

<!-- layers panel -->
<div class="a" id="layers" style="left:863px;top:95px;width:183px;height:388px;background:#4d4d4d">
  <div class="a" style="left:0;top:0;width:183px;height:10px;background:#454545"></div>
  <svg style="left:160px;top:4px" width="6" height="5" viewBox="0 0 6 5"><path d="M2.5 0.5 L0.7 2.5 L2.5 4.5 M5.3 0.5 L3.5 2.5 L5.3 4.5" fill="none" stroke="#c8c8c8" stroke-width="0.9"/></svg>
  <svg style="left:174px;top:3px" width="6" height="6" viewBox="0 0 6 6"><path d="M0.5 0.5 L5.5 5.5 M5.5 0.5 L0.5 5.5" stroke="#e0e0e0" stroke-width="1.1"/></svg>
  <div class="a" style="left:0;top:10px;width:183px;height:20px;background:#424242"></div>
  <div class="a" style="left:43px;top:10px;width:27px;height:20px;background:#4d4d4d"></div>
  <div class="t" style="left:7px;top:15px;font-size:8.5px;color:#9c9c9c;letter-spacing:5.4px">属调库</div>
  <div class="t" style="left:48px;top:15px;font-size:8.5px;color:#f4f4f4;font-weight:bold">图层</div>
  <div class="t" style="left:77px;top:15px;font-size:8.5px;color:#9c9c9c;letter-spacing:5.4px">通路颜色渐图</div>
  <svg style="left:171px;top:17px" width="8" height="6" viewBox="0 0 8 6"><path d="M0 0.5 H8 M0 3 H8 M0 5.5 H8" stroke="#c8c8c8" stroke-width="1"/></svg>

  <div class="a field" style="left:4px;top:37px;width:61px;height:14px"></div>
  <svg style="left:8px;top:40px" width="8" height="8" viewBox="0 0 8 8"><circle cx="3.2" cy="3.2" r="2.4" fill="none" stroke="#eee" stroke-width="1.2"/><path d="M5 5 L7.5 7.5" stroke="#eee" stroke-width="1.3"/></svg>
  <div class="t" style="left:17px;top:40px;font-size:8.5px;color:#e8e8e8">类型</div>
  <svg style="left:56px;top:43px" width="6" height="4" viewBox="0 0 6 4"><path d="M0.5 0.5 L3 3 L5.5 0.5" fill="none" stroke="#d8d8d8" stroke-width="1"/></svg>
  <svg style="left:76px;top:39px" width="11" height="9" viewBox="0 0 11 9"><rect x="0.6" y="0.6" width="9.8" height="7.8" rx="1" fill="none" stroke="#e0e0e0" stroke-width="1.1"/><path d="M2 7 L4.5 4 L6.5 6 L7.5 5 L9 7 Z" fill="#e0e0e0"/></svg>
  <svg style="left:94px;top:39px" width="9" height="9" viewBox="0 0 9 9"><circle cx="4.5" cy="4.5" r="3.9" fill="none" stroke="#e0e0e0" stroke-width="1.1"/><path d="M1.7 7.3 A3.9 3.9 0 0 1 7.3 1.7 Z" fill="#e0e0e0"/></svg>
  <div class="t" style="left:112px;top:38px;font-size:12px;color:#e6e6e6;font-family:'Liberation Serif',serif;font-weight:bold">T</div>
  <svg style="left:129px;top:39px" width="10" height="10" viewBox="0 0 10 10"><rect x="1.5" y="1.5" width="7" height="7" fill="none" stroke="#e0e0e0" stroke-width="1.1"/><rect x="0" y="0" width="3" height="3" fill="#e0e0e0"/><rect x="7" y="0" width="3" height="3" fill="#e0e0e0"/><rect x="0" y="7" width="3" height="3" fill="#e0e0e0"/><rect x="7" y="7" width="3" height="3" fill="#e0e0e0"/></svg>
  <svg style="left:147px;top:39px" width="9" height="10" viewBox="0 0 9 10"><path d="M1 0.5 H5.5 L8 3 V9.5 H1 Z" fill="#e0e0e0"/><rect x="3" y="5" width="4" height="3.5" fill="#4d4d4d"/><path d="M3.8 5 V4 C3.8 2.8 6.2 2.8 6.2 4 V5" fill="none" stroke="#4d4d4d" stroke-width=".8"/></svg>
  <div class="a" style="left:167px;top:37px;width:7px;height:14px;border-radius:3.5px;background:#3a3a3a"></div>
  <div class="a" style="left:167px;top:36px;width:7px;height:7px;border-radius:50%;background:#ececec"></div>

  <div class="a field" style="left:4px;top:58px;width:84px;height:14px;color:#ddd;padding-left:5px;line-height:13px">正常</div>
  <svg style="left:79px;top:64px" width="6" height="4" viewBox="0 0 6 4"><path d="M0.5 0.5 L3 3 L5.5 0.5" fill="none" stroke="#d8d8d8" stroke-width="1"/></svg>
  <div class="t" style="left:94px;top:61px;font-size:8.5px;color:#c4c4c4;letter-spacing:0.5px">不透明度:</div>
  <div class="a field" style="left:135px;top:58px;width:28px;height:14px;background:#404040;color:#fff;line-height:13px">100%</div>
  <div class="a field" style="left:163px;top:58px;width:11px;height:14px"></div>
  <svg style="left:166px;top:64px" width="6" height="4" viewBox="0 0 6 4"><path d="M0.5 0.5 L3 3 L5.5 0.5" fill="none" stroke="#d8d8d8" stroke-width="1"/></svg>

  <div class="t" style="left:5px;top:82px;font-size:8.5px;color:#c4c4c4">锁定:</div>
  <svg style="left:32px;top:82px" width="9" height="9" viewBox="0 0 9 9"><rect x="0.5" y="0.5" width="8" height="8" fill="none" stroke="#bdbdbd" stroke-width="1" stroke-dasharray="1.3 1"/><rect x="2.5" y="2.5" width="2" height="2" fill="#bdbdbd"/><rect x="4.5" y="4.5" width="2" height="2" fill="#bdbdbd"/></svg>
  <svg style="left:48px;top:81px" width="10" height="10" viewBox="0 0 10 10"><path d="M9 0.5 L4 6 L5 7 L9.8 1.3 Z" fill="#d0d0d0"/><path d="M3.5 6.5 C2.3 6.8 2.2 8 0.8 9.3 C2.8 9.8 4.4 8.8 4.6 7.5 Z" fill="#d0d0d0"/></svg>
  <svg style="left:63px;top:81px" width="11" height="11" viewBox="0 0 16 16"><path d="M8 1 L10 3.5 H8.6 V7.4 H12.5 V6 L15 8 L12.5 10 V8.6 H8.6 V12.5 H10 L8 15 L6 12.5 H7.4 V8.6 H3.5 V10 L1 8 L3.5 6 V7.4 H7.4 V3.5 H6 Z" fill="#d8d8d8"/></svg>
  <svg style="left:79px;top:81px" width="12" height="10" viewBox="0 0 12 10"><path d="M3 0 V7.5 H12 M0 2.5 H9.5 V10" fill="none" stroke="#d8d8d8" stroke-width="1.2"/></svg>
  <svg style="left:96px;top:80px" width="9" height="11" viewBox="0 0 9 11"><rect x="0.5" y="4.5" width="8" height="6" rx="0.8" fill="#e6e6e6"/><path d="M2.3 4.5 V3 C2.3 0.6 6.7 0.6 6.7 3 V4.5" fill="none" stroke="#e6e6e6" stroke-width="1.2"/><circle cx="4.5" cy="7.3" r="0.9" fill="#4d4d4d"/></svg>
  <div class="t" style="left:111px;top:82px;font-size:8.5px;color:#c4c4c4">填充:</div>
  <div class="a field" style="left:135px;top:79px;width:28px;height:14px;background:#404040;color:#fff;line-height:13px">100%</div>
  <div class="a field" style="left:163px;top:79px;width:11px;height:14px"></div>
  <svg style="left:166px;top:85px" width="6" height="4" viewBox="0 0 6 4"><path d="M0.5 0.5 L3 3 L5.5 0.5" fill="none" stroke="#d8d8d8" stroke-width="1"/></svg>

  <!-- layer rows -->
  <div class="a" style="left:0;top:98px;width:172px;height:1px;background:#3e3e3e"></div>
  <div class="a" style="left:172px;top:98px;width:11px;height:370px;background:#474747"></div>
  <div class="a" style="left:22px;top:99px;width:150px;height:28px;background:#6b6b6b"></div>
  <div class="a" style="left:21px;top:99px;width:1px;height:87px;background:#404040"></div>
  <div class="a" style="left:0;top:127px;width:172px;height:1px;background:#404040"></div>
  <div class="a" style="left:0;top:157px;width:172px;height:1px;background:#404040"></div>
  <div class="a" style="left:0;top:186px;width:172px;height:1px;background:#404040"></div>
  <svg style="left:6px;top:109px" width="11" height="8" viewBox="0 0 11 8"><path d="M0.3 4 C2.5 0 8.5 0 10.7 4 C8.5 8 2.5 8 0.3 4 Z" fill="#f0f0f0"/><circle cx="5.5" cy="4" r="2" fill="#4d4d4d"/><circle cx="5.5" cy="4" r="0.9" fill="#f0f0f0"/></svg>
  <svg style="left:6px;top:139px" width="11" height="8" viewBox="0 0 11 8"><path d="M0.3 4 C2.5 0 8.5 0 10.7 4 C8.5 8 2.5 8 0.3 4 Z" fill="#f0f0f0"/><circle cx="5.5" cy="4" r="2" fill="#4d4d4d"/><circle cx="5.5" cy="4" r="0.9" fill="#f0f0f0"/></svg>
  <svg style="left:23px;top:100px" width="27" height="26" viewBox="0 0 27 26"><path d="M0.5 7 V0.5 H8 M19 0.5 H26.5 V7 M26.5 19 V25.5 H19 M8 25.5 H0.5 V19" fill="none" stroke="#f0f0f0" stroke-width="1"/></svg>
  <div class="t" style="left:31px;top:105px;font-size:17px;color:#efefef;font-family:'Liberation Serif',serif">T</div>
  <div class="t" style="left:56px;top:109px;font-size:8.5px;color:#e0e0e0">彩</div>
  <div class="t" style="left:31px;top:135px;font-size:17px;color:#efefef;font-family:'Liberation Serif',serif">T</div>
  <div class="t" style="left:56px;top:139px;font-size:8.5px;color:#e4e4e4;letter-spacing:0.2px">设计摄影部</div>
  <div class="a" style="left:6px;top:167px;width:10px;height:9px;border:1px solid #5e5e5e;background:#4a4a4a"></div>
  <svg style="left:25.6px;top:161.9px" width="22.3" height="18.3" viewBox="0 0 22 18"><rect width="22" height="18" fill="#fff"/><path d="M5.5 3 C6 0.8 8 0.3 9 1 C10.5 1.5 11 3 11.3 3.8 C9.5 2.6 7.5 2.6 5.5 3 Z" fill="#4c9a4a"/><ellipse cx="5.8" cy="7" rx="5" ry="4.6" fill="#d93a3a"/><circle cx="16" cy="9" r="5.3" fill="#c9302c"/><ellipse cx="17.5" cy="7.5" rx="1.2" ry="2" fill="#ee8a84"/><ellipse cx="7" cy="11.6" rx="5.6" ry="5" fill="#f6efe2" stroke="#e9b9b0" stroke-width="0.5"/><circle cx="7" cy="11" r="0.7" fill="#6a4a2a"/><circle cx="5.5" cy="14.5" r="0.7" fill="#6a4a2a"/></svg>
  <div class="t" style="left:56px;top:168px;font-size:8.5px;color:#e4e4e4">图层 0</div>

  <!-- bottom icons -->
  <div class="a" style="left:0;top:370px;width:183px;height:1px;background:#404040"></div>
  <svg style="left:34px;top:376px" width="12" height="6" viewBox="0 0 12 6"><rect x="0.6" y="0.6" width="6" height="4.8" rx="2.4" fill="none" stroke="#8a8a8a" stroke-width="1.1"/><rect x="5.4" y="0.6" width="6" height="4.8" rx="2.4" fill="none" stroke="#8a8a8a" stroke-width="1.1"/></svg>
  <div class="t" style="left:55px;top:373px;font-size:10.5px;color:#e0e0e0;font-style:italic;font-family:'Liberation Serif',serif">fx</div>
  <div class="a" style="left:64px;top:383px;width:0;height:0;border-left:1.5px solid transparent;border-right:1.5px solid transparent;border-top:2px solid #ddd"></div>
  <svg style="left:75px;top:375px" width="10" height="8" viewBox="0 0 10 8"><rect width="10" height="8" rx="0.8" fill="#e6e6e6"/><circle cx="5" cy="4" r="2.4" fill="#4d4d4d"/></svg>
  <svg style="left:95px;top:374px" width="9" height="9" viewBox="0 0 9 9"><circle cx="4.5" cy="4.5" r="3.9" fill="none" stroke="#e0e0e0" stroke-width="1.1"/><path d="M1.7 7.3 A3.9 3.9 0 0 1 7.3 1.7 Z" fill="#e0e0e0"/></svg>
  <div class="a" style="left:104px;top:383px;width:0;height:0;border-left:1.5px solid transparent;border-right:1.5px solid transparent;border-top:2px solid #ddd"></div>
  <svg style="left:114px;top:375px" width="10" height="8" viewBox="0 0 10 8"><path d="M0 0 H4 L5 1.2 H10 V8 H0 Z" fill="#e6e6e6"/></svg>
  <svg style="left:134px;top:374px" width="9" height="9" viewBox="0 0 9 9"><rect x="0.6" y="0.6" width="7.8" height="7.8" rx="1" fill="none" stroke="#e6e6e6" stroke-width="1.1"/><path d="M4.5 2.5 V6.5 M2.5 4.5 H6.5" stroke="#e6e6e6" stroke-width="1.1"/></svg>
  <svg style="left:154px;top:374px" width="9" height="10" viewBox="0 0 9 10"><path d="M0.5 2 H8.5 M3 2 V0.6 H6 V2 M1.4 2 L2 9.5 H7 L7.6 2" fill="none" stroke="#e6e6e6" stroke-width="1.1"/><path d="M3.5 4 V8 M5.5 4 V8" stroke="#e6e6e6" stroke-width=".8"/></svg>
</div>


<!-- history panel -->
<div class="a" id="history" style="left:863px;top:483px;width:183px;height:179px;background:#4d4d4d;overflow:hidden">
  <div class="a" style="left:0;top:0;width:183px;height:4px;background:#3a3a3a"></div>
  <div class="a" style="left:0;top:4px;width:183px;height:19px;background:#424242"></div>
  <div class="a" style="left:0;top:4px;width:45px;height:19px;background:#4d4d4d"></div>
  <div class="t" style="left:6px;top:8px;font-size:8.5px;color:#f4f4f4">历史记录</div>
  <svg style="left:172px;top:10px" width="8" height="6" viewBox="0 0 8 6"><path d="M0 0.5 H8 M0 3 H8 M0 5.5 H8" stroke="#c8c8c8" stroke-width="1"/></svg>
  <div class="a" style="left:0;top:23px;width:183px;height:132px;overflow:hidden">
    <div class="a" style="left:0;top:-19px;width:183px;height:160px">
    
    <div class="a" style="left:0;top:33.7px;width:172px;height:1px;background:#424242"></div>
    <div class="a" style="left:5px;top:21.0px;width:9px;height:9px;border:1px solid #5c5c5c;background:#4a4a4a"></div>
    <div class="t" style="left:22.5px;top:19.5px;font-size:14px;font-weight:bold;color:#efefef;font-family:'Liberation Serif',serif">T</div>
    <div class="t" style="left:43px;top:21.0px;font-size:8.5px;color:#e8e8e8;letter-spacing:0.2px">新建文字图层</div>
    <div class="a" style="left:0;top:50.2px;width:172px;height:1px;background:#424242"></div>
    <div class="a" style="left:5px;top:37.5px;width:9px;height:9px;border:1px solid #5c5c5c;background:#4a4a4a"></div>
    <div class="t" style="left:22.5px;top:36.0px;font-size:14px;font-weight:bold;color:#efefef;font-family:'Liberation Serif',serif">T</div>
    <div class="t" style="left:43px;top:37.5px;font-size:8.5px;color:#e8e8e8;letter-spacing:0.2px">编辑文字图层</div>
    <div class="a" style="left:0;top:66.90000000000005px;width:172px;height:1px;background:#424242"></div>
    <div class="a" style="left:5px;top:54.200000000000045px;width:9px;height:9px;border:1px solid #5c5c5c;background:#4a4a4a"></div>
    <div class="t" style="left:22.5px;top:52.700000000000045px;font-size:14px;font-weight:bold;color:#efefef;font-family:'Liberation Serif',serif">T</div>
    <div class="t" style="left:43px;top:54.200000000000045px;font-size:8.5px;color:#e8e8e8;letter-spacing:0.2px">编辑文字图层</div>
    <div class="a" style="left:0;top:83.49999999999996px;width:172px;height:1px;background:#424242"></div>
    <div class="a" style="left:5px;top:70.79999999999995px;width:9px;height:9px;border:1px solid #5c5c5c;background:#4a4a4a"></div>
    <svg style="left:24px;top:70.29999999999995px" width="9" height="10" viewBox="0 0 9 10"><rect x="0.6" y="0.6" width="7.8" height="8.8" rx="0.8" fill="none" stroke="#efefef" stroke-width="1.1"/><path d="M2 3 H7 M2 5 H7 M2 7 H7" stroke="#efefef" stroke-width="0.9"/></svg>
    <div class="t" style="left:43px;top:70.79999999999995px;font-size:8.5px;color:#e8e8e8;letter-spacing:0.2px">图层可见性</div>
    <div class="a" style="left:0;top:100.2px;width:172px;height:1px;background:#424242"></div>
    <div class="a" style="left:5px;top:87.5px;width:9px;height:9px;border:1px solid #5c5c5c;background:#4a4a4a"></div>
    <div class="t" style="left:22.5px;top:86.0px;font-size:14px;font-weight:bold;color:#efefef;font-family:'Liberation Serif',serif">T</div>
    <div class="t" style="left:43px;top:87.5px;font-size:8.5px;color:#e8e8e8;letter-spacing:0.2px">新建文字图层</div>
    <div class="a" style="left:0;top:100.5px;width:172px;height:17px;background:#6b6b6b"></div>
    <div class="a" style="left:0;top:117.2px;width:172px;height:1px;background:#424242"></div>
    <div class="a" style="left:5px;top:104.5px;width:9px;height:9px;border:1px solid #5c5c5c;background:#4a4a4a"></div>
    <div class="t" style="left:22.5px;top:103.0px;font-size:14px;font-weight:bold;color:#efefef;font-family:'Liberation Serif',serif">T</div>
    <div class="t" style="left:43px;top:104.5px;font-size:8.5px;color:#e8e8e8;letter-spacing:0.2px">编辑文字图层</div>
    <div class="a" style="left:0;top:134.2px;width:172px;height:1px;background:#424242"></div>
    <div class="a" style="left:5px;top:121.5px;width:9px;height:9px;border:1px solid #5c5c5c;background:#4a4a4a"></div>
    <svg style="left:24px;top:121px" width="9" height="10" viewBox="0 0 9 10"><rect x="0.6" y="0.6" width="7.8" height="8.8" rx="0.8" fill="none" stroke="#7a7a7a" stroke-width="1.1"/><path d="M2 3 H7 M2 5 H7 M2 7 H7" stroke="#7a7a7a" stroke-width="0.9"/></svg>
    <div class="t" style="left:43px;top:121.5px;font-size:8.5px;font-style:italic;color:#7c7c7c;letter-spacing:0.2px">栅格化文字</div>
    <div class="a" style="left:0;top:151.2px;width:172px;height:1px;background:#424242"></div>
    <div class="a" style="left:5px;top:138.5px;width:9px;height:9px;border:1px solid #5c5c5c;background:#4a4a4a"></div>
    <svg style="left:23px;top:138px" width="11" height="10" viewBox="0 0 13 12"><path d="M7.5 0.5 L12.5 4.5 L6.5 10.5 H3 L0.8 8 Z" fill="none" stroke="#7a7a7a" stroke-width="1.2"/><path d="M7.5 0.5 L12.5 4.5 L9 8 L4 4 Z" fill="#7a7a7a"/><path d="M2 11.5 H12" stroke="#7a7a7a" stroke-width="1"/></svg>
    <div class="t" style="left:43px;top:138.5px;font-size:8.5px;font-style:italic;color:#7c7c7c;letter-spacing:0.2px">橡皮擦</div>
    </div>
    <div class="a" style="left:0;top:0;width:172px;height:3.5px;background:#4d4d4d"></div>
    <div class="a" style="left:172px;top:0;width:11px;height:132px;background:#474747"></div>
    <div class="a" style="left:173px;top:85px;width:9px;height:35px;background:#6e6e6e"></div>
    <svg style="left:175px;top:9px" width="6" height="4" viewBox="0 0 6 4"><path d="M0.5 3.5 L3 1 L5.5 3.5" fill="none" stroke="#c8c8c8" stroke-width="1"/></svg>
    <svg style="left:175px;top:124px" width="6" height="4" viewBox="0 0 6 4"><path d="M0.5 0.5 L3 3 L5.5 0.5" fill="none" stroke="#c8c8c8" stroke-width="1"/></svg>
  </div>
  <div class="a" style="left:0;top:155px;width:183px;height:19px;background:#4d4d4d;border-top:1px solid #404040"></div>
  <svg style="left:107px;top:160px" width="11" height="10" viewBox="0 0 11 10"><path d="M3.5 0.5 H8 L10.5 3 V9.5 H3.5 Z" fill="#e6e6e6"/><path d="M0 4.5 H4.5 M2.8 2.5 V6.5" stroke="#e6e6e6" stroke-width="1.3"/><rect x="5.5" y="4.5" width="3" height="3" fill="#4d4d4d"/></svg>
  <svg style="left:132px;top:160px" width="11" height="9" viewBox="0 0 11 9"><path d="M0 1.5 H3 L4 0 H7 L8 1.5 H11 V9 H0 Z" fill="#e6e6e6"/><circle cx="5.5" cy="5" r="2.1" fill="#4d4d4d"/><circle cx="5.5" cy="5" r="1" fill="#e6e6e6"/></svg>
  <svg style="left:154px;top:159px" width="9" height="10" viewBox="0 0 9 10"><path d="M0.5 2 H8.5 M3 2 V0.6 H6 V2 M1.4 2 L2 9.5 H7 L7.6 2" fill="none" stroke="#e6e6e6" stroke-width="1.1"/><path d="M3.5 4 V8 M5.5 4 V8" stroke="#e6e6e6" stroke-width=".8"/></svg>
  <div class="a" style="left:0;top:174px;width:183px;height:5px;background:#3c3c3c"></div>
</div>
<div class="a" id="mp">
  <div class="a" style="left:0;top:9px;width:17px;height:652px;background:#2b2e33"></div>
  <div class="a" style="left:17px;top:9px;width:186px;height:652px;background:linear-gradient(90deg,#4c5055 0%,#34373a 25%,#1b1c1e 60%,#000 97%)"></div>
    <div class="a tile" style="top:19px;height:98.4px;border-color:#2c9c6e">
    <div class="a" style="left:62px;top:18px;width:47px;height:47px;border-radius:50%;overflow:hidden;background:#141416">
      <div class="a" style="left:0;top:32px;width:22px;height:15px;background:#6e5a4c;transform:skewY(-18deg)"></div>
      <div class="a" style="left:0;top:0;width:47px;height:22px;background:#3a3c42"></div>
      <div class="a" style="left:0;top:23px;width:14px;height:3px;background:#d8d8d8"></div>
      <div class="a" style="left:0;top:30px;width:12px;height:5px;background:#8a8078"></div>
      <div class="a" style="left:31px;top:19px;width:16px;height:6px;background:#2f5fc0"></div>
      <div class="a" style="left:16px;top:18px;width:15px;height:17px;background:#e0231c;transform:skewX(-28deg)"></div>
      <div class="a" style="left:24px;top:24px;width:20px;height:18px;background:#131316;border-radius:3px 3px 0 0;transform:skewX(-10deg)"></div>
      <div class="a" style="left:38px;top:28px;width:9px;height:3px;background:#9a9a9a"></div>
      <div class="a" style="left:17px;top:40px;width:5px;height:8px;background:#c88a52;transform:skewX(-20deg)"></div>
      <div class="a" style="left:27px;top:41px;width:5px;height:7px;background:#b87c48;transform:skewX(15deg)"></div>
    </div>
    <div class="a" style="left:1px;top:79px;width:161px;height:16px;background:rgba(8,8,10,.8);border-radius:2px"></div>
    <div class="a" style="left:1px;top:79px;width:16.5px;height:16px;background:#f5821f"></div>
    <svg style="left:4px;top:82px" width="11" height="11" viewBox="0 0 11 11"><circle cx="5.5" cy="3.2" r="2.4" fill="#fff"/><path d="M0.8 10.5 C1 6 10 6 10.2 10.5 Z" fill="#fff"/></svg>
    <svg style="left:20px;top:81px" width="13" height="12" viewBox="0 0 13 12"><rect x="0.5" y="0.5" width="12" height="8.5" rx="1" fill="#fff"/><path d="M4 11.3 H9" stroke="#fff" stroke-width="1.3"/><path d="M3.5 7 C4 4.5 6 4 7.5 4 V2.5 L10 5 L7.5 7.3 V5.8 C6 5.6 4.5 6 3.5 7 Z" fill="#1a1a1c"/></svg>
    <svg style="left:37px;top:81px" width="10" height="13" viewBox="0 0 10 13"><rect x="3" y="0.3" width="4" height="7.5" rx="2" fill="#fff"/><path d="M1 5.5 C1 10.5 9 10.5 9 5.5 M5 9.5 V12.5" fill="none" stroke="#fff" stroke-width="1.2"/></svg>
    <div class="t" id="sh1" style="left:50.5px;top:83px;font-size:8.9px;color:#fff">孙千超16211206的屏幕共享</div>
  </div>
  <div class="a tile" style="top:123.6px">
    <div class="a av">天阳</div>
    <div class="a nm">新闻编审部叶天阳</div>
    <svg style="left:5px;top:81px" width="10" height="11" viewBox="0 0 10 11"><rect x="3.2" y="0.5" width="3.6" height="6" rx="1.8" fill="#e8e8e8"/><path d="M1.3 4.5 C1.3 9 8.7 9 8.7 4.5 M5 8 V10.5" fill="none" stroke="#e8e8e8" stroke-width="1"/><path d="M0.5 10 L9.5 0.8" stroke="#e5453a" stroke-width="1.1"/></svg>
  </div>
  <div class="a tile" style="top:228px">
    <div class="a av">翌馨</div>
    <div class="a nm">孙翌馨</div>
    <svg style="left:5px;top:81px" width="10" height="11" viewBox="0 0 10 11"><rect x="3.2" y="0.5" width="3.6" height="6" rx="1.8" fill="#e8e8e8"/><path d="M1.3 4.5 C1.3 9 8.7 9 8.7 4.5 M5 8 V10.5" fill="none" stroke="#e8e8e8" stroke-width="1"/><path d="M0.5 10 L9.5 0.8" stroke="#e5453a" stroke-width="1.1"/></svg>
  </div>
  <div class="a tile" style="top:332.3px">
    <div class="a" style="left:62px;top:18px;width:47px;height:47px;border-radius:50%;overflow:hidden;background:#d3a776">
      <div class="a" style="left:0;top:0;width:14px;height:47px;background:#c99a68"></div>
      <div class="a" style="left:26px;top:0;width:13px;height:8px;background:#e6e6ea"></div>
      <div class="a" style="left:27px;top:7px;width:6px;height:22px;background:#15151a"></div>
      <div class="a" style="left:34px;top:7px;width:6px;height:23px;background:#15151a;transform:skewX(6deg)"></div>
      <div class="a" style="left:28px;top:28px;width:5px;height:4px;border-radius:2px;background:#f2f2f2"></div>
      <div class="a" style="left:37px;top:29px;width:5px;height:5px;border-radius:2px;background:#f2f2f2"></div>
      <div class="a" style="left:5px;top:33px;width:36px;height:18px;border-radius:45% 45% 0 0;background:#a9aeb6"></div>
      <div class="a" style="left:24px;top:32px;width:11px;height:6px;border-radius:3px;background:#d9853f"></div>
      <div class="a" style="left:13px;top:26px;width:13px;height:10px;border-radius:40%;background:#f4ede6"></div>
      <div class="a" style="left:2px;top:4px;width:23px;height:18px;border-radius:50%;background:#2a1f1a"></div>
      <div class="a" style="left:3px;top:11px;width:21px;height:21px;border-radius:50%;background:#f0cbb0"></div>
      <div class="a" style="left:4px;top:6px;width:20px;height:9px;border-radius:50% 50% 30% 30%;background:#2a1f1a"></div>
      <div class="a" style="left:7px;top:19px;width:3px;height:2px;background:#3a2a22"></div>
      <div class="a" style="left:15px;top:19px;width:3px;height:2px;background:#3a2a22"></div>
      <div class="a" style="left:9px;top:26px;width:7px;height:3px;border-radius:0 0 4px 4px;background:#fff"></div>
      <div class="a" style="left:19px;top:38px;width:3px;height:8px;background:#d9853f"></div>
    </div>
    <div class="a nm">16201205陈诺</div>
    <svg style="left:5px;top:81px" width="10" height="11" viewBox="0 0 10 11"><rect x="3.2" y="0.5" width="3.6" height="6" rx="1.8" fill="#e8e8e8"/><path d="M1.3 4.5 C1.3 9 8.7 9 8.7 4.5 M5 8 V10.5" fill="none" stroke="#e8e8e8" stroke-width="1"/><path d="M0.5 10 L9.5 0.8" stroke="#e5453a" stroke-width="1.1"/></svg>
  </div>
  <div class="a tile" style="top:436.7px">
    <div class="a av">佳轩</div>
    <div class="a nm">新闻编审部应佳轩</div>
    <svg style="left:5px;top:81px" width="10" height="11" viewBox="0 0 10 11"><rect x="3.2" y="0.5" width="3.6" height="6" rx="1.8" fill="#e8e8e8"/><path d="M1.3 4.5 C1.3 9 8.7 9 8.7 4.5 M5 8 V10.5" fill="none" stroke="#e8e8e8" stroke-width="1"/><path d="M0.5 10 L9.5 0.8" stroke="#e5453a" stroke-width="1.1"/></svg>
  </div>
  <div class="a tile" style="top:541px">
    <div class="a av">雨晴</div>
    <div class="a nm">设计摄影部张雨晴</div>
    <svg style="left:5px;top:81px" width="10" height="11" viewBox="0 0 10 11"><rect x="3.2" y="0.5" width="3.6" height="6" rx="1.8" fill="#e8e8e8"/><path d="M1.3 4.5 C1.3 9 8.7 9 8.7 4.5 M5 8 V10.5" fill="none" stroke="#e8e8e8" stroke-width="1"/><path d="M0.5 10 L9.5 0.8" stroke="#e5453a" stroke-width="1.1"/></svg>
  </div>
</div>
<!-- speaking tooltip -->
<div class="a" style="left:1046px;top:65px;width:200px;height:29px;border-radius:5px;background:rgba(38,40,43,.97)"></div>
<svg style="left:1054px;top:72px" width="12" height="15" viewBox="0 0 12 15"><rect x="4" y="1" width="4.4" height="8" rx="2.2" fill="#7b7d82"/><path d="M2 6.5 C2 12 10.4 12 10.4 6.5 M6.2 11 V14" fill="none" stroke="#7b7d82" stroke-width="1.1"/><path d="M0.8 13 L11.5 1.5" stroke="#e5453a" stroke-width="1.1"/></svg>
<div class="a" style="left:1074px;top:72px;width:1px;height:15px;background:#0c0c0d"></div>
<div class="t" style="left:1082px;top:74.5px;font-size:10.1px;color:#fff">正在讲话: 孙千超16211206;</div>
<div class="a" style="left:1198px;top:67px;width:24px;height:25px;background:linear-gradient(90deg,rgba(38,40,43,0),rgba(70,72,76,.9) 60%)"></div>
<div class="a" style="left:1220px;top:71px;width:1px;height:17px;background:#5a5c60"></div>
<svg style="left:1226px;top:72px" width="14" height="13" viewBox="0 0 14 13"><path d="M6 0.8 L0.8 5.5 L6 10.2 V7.3 C9.5 7.2 11.5 8.5 13.2 12 C13.2 7 10.5 3.8 6 3.6 Z" fill="#8e9095"/></svg>
<!-- recording -->
<svg style="left:16px;top:74px" width="14" height="11" viewBox="0 0 14 11"><path d="M3.5 10 C0 10 0 5.5 3 5.2 C3 1 9 0 10 3.8 C14 3.5 14.5 10 10.5 10 Z" fill="#fff"/><circle cx="6.8" cy="6" r="2.2" fill="#f0443e"/></svg>
<div class="t" style="left:37px;top:75px;font-size:10.5px;color:#fff;text-shadow:0 0 2px #000">录制中</div>
<!-- share label -->
<div class="a" style="left:0;top:672px;width:198px;height:19px;border-radius:0 4px 4px 0;background:rgba(84,84,84,.92)"></div>
<div class="a" style="left:0;top:672px;width:19px;height:19px;background:#f5821f"></div>
<svg style="left:3px;top:675px" width="13" height="13" viewBox="0 0 11 11"><circle cx="5.5" cy="3.2" r="2.4" fill="#fff"/><path d="M0.8 10.5 C1 6 10 6 10.2 10.5 Z" fill="#fff"/></svg>
<svg style="left:21px;top:675px" width="14" height="13" viewBox="0 0 13 12"><rect x="0.5" y="0.5" width="12" height="8.5" rx="1" fill="#fff"/><path d="M4 11.3 H9" stroke="#fff" stroke-width="1.3"/><path d="M3.5 7 C4 4.5 6 4 7.5 4 V2.5 L10 5 L7.5 7.3 V5.8 C6 5.6 4.5 6 3.5 7 Z" fill="#444"/></svg>
<svg style="left:38px;top:674px" width="11" height="15" viewBox="0 0 10 13"><rect x="3" y="0.3" width="4" height="7.5" rx="2" fill="#fff"/><path d="M1 5.5 C1 10.5 9 10.5 9 5.5 M5 9.5 V12.5" fill="none" stroke="#fff" stroke-width="1.2"/></svg>
<div class="t" style="left:52.5px;top:676px;font-size:11.6px;color:#fff">孙千超16211206的屏幕共享</div>

<!-- meeting toolbar -->
<div class="a" id="mtool" style="left:879px;top:16px;width:389px;height:28px;background:linear-gradient(#f5f6fb 0,#f5f6fb 66%,#e9eaf1 70%,#eaebf2 100%)"></div>
<svg style="left:887.5px;top:20.0px" width="14" height="14" viewBox="0 0 14 14"><path d="M2 12.5 L2.8 9.3 L9.8 2.3 L12 4.5 L5 11.5 Z M8.6 3.5 L10.8 5.7" fill="none" stroke="#222" stroke-width="1.1" stroke-linejoin="round"/></svg>
<svg style="left:911.0px;top:20.0px" width="14" height="14" viewBox="0 0 14 14"><rect x="1.5" y="1.5" width="11" height="11" rx="0.8" fill="none" stroke="#222" stroke-width="1.1"/></svg>
<svg style="left:935.0px;top:20.0px" width="14" height="14" viewBox="0 0 14 14"><circle cx="7" cy="7" r="5.6" fill="none" stroke="#222" stroke-width="1.1"/></svg>
<svg style="left:959.0px;top:20.0px" width="14" height="14" viewBox="0 0 14 14"><path d="M1.5 12.5 L12 2 M5.5 2 H12 V8.5" fill="none" stroke="#222" stroke-width="1.1"/></svg>
<svg style="left:982.6px;top:20.0px" width="14" height="14" viewBox="0 0 14 14"><path d="M1.8 12.8 L7 1.5 L12.2 12.8 M3.8 8.6 H10.2" fill="none" stroke="#222" stroke-width="1.1"/></svg>
<svg style="left:1005.7px;top:20.0px" width="14" height="14" viewBox="0 0 14 14"><path d="M1.5 12.5 L8 6 L9.5 7.5 L3 14 Z" fill="none" stroke="#222" stroke-width="1"/><path d="M10.5 1 V3 M10.5 6.5 V8.5 M7 4.7 H8.7 M12.2 4.7 H14 M8.2 2.3 L9.2 3.3 M12.8 2.3 L11.8 3.3 M12.8 7 L11.8 6" stroke="#222" stroke-width="0.8"/></svg>
<div class="a" style="left:1031px;top:20px;width:1px;height:14px;background:#c9cad2"></div>
<svg style="left:1041.0px;top:20.0px" width="14" height="14" viewBox="0 0 14 14"><path d="M2.8 4.2 A5.3 5.3 0 1 1 1.8 8.5" fill="none" stroke="#222" stroke-width="1.1"/><path d="M2.6 1 V4.6 H6.2" fill="none" stroke="#222" stroke-width="1.1"/></svg>
<svg style="left:1065.0px;top:20.0px" width="14" height="14" viewBox="0 0 14 14"><path d="M1.5 3.5 H12.5 M5 3.5 V1.5 H9 V3.5 M2.8 3.5 V12.5 H11.2 V3.5 M5.6 6 V10.5 M8.4 6 V10.5" fill="none" stroke="#222" stroke-width="1.1"/></svg>
<div class="a" style="left:1089px;top:20px;width:1px;height:14px;background:#c9cad2"></div>
<svg style="left:1109.0px;top:20.0px" width="14" height="14" viewBox="0 0 14 14"><path d="M1 5 H3.8 L7.5 1.5 V12.5 L3.8 9 H1 Z" fill="none" stroke="#222" stroke-width="1.1" stroke-linejoin="round"/><path d="M9.5 4.5 C10.8 5.8 10.8 8.2 9.5 9.5 M11.3 2.8 C13.6 5 13.6 9 11.3 11.2" fill="none" stroke="#222" stroke-width="1"/></svg>
<svg style="left:1137.0px;top:19.5px" width="14" height="15" viewBox="0 0 14 14"><rect x="4.5" y="0.8" width="5" height="8" rx="2.5" fill="none" stroke="#222" stroke-width="1.1"/><path d="M2 6.5 C2 12 12 12 12 6.5 M7 10.8 V13.5" fill="none" stroke="#222" stroke-width="1.1"/></svg>
<svg style="left:1166.0px;top:20.0px" width="14" height="14" viewBox="0 0 14 14"><path d="M1.5 1.5 L12.5 12.5 M12.5 1.5 L1.5 12.5" fill="none" stroke="#222" stroke-width="1.1"/></svg>
<div class="a" style="left:1195px;top:17px;width:70px;height:20px;border-radius:3px;background:#e8604c"></div>
<div class="t" style="left:1199px;top:22px;font-size:10.5px;color:#fff">01:00:08 结束</div>

</body>
</html>
